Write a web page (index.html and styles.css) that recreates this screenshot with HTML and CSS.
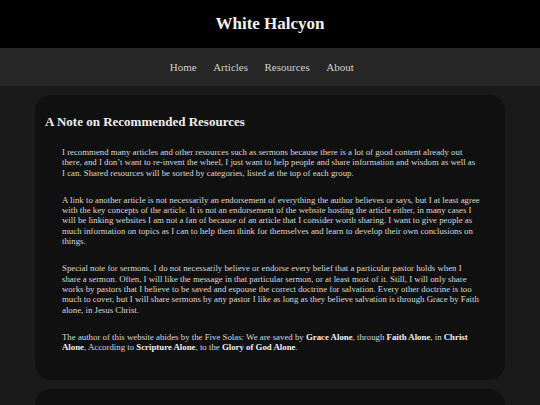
FILE: index.html
```html
<!DOCTYPE html>
<html>
<head>
<meta charset="utf-8">
<link rel="stylesheet" href="styles.css">
</head>
<body>
<header class="site-header">
  <h1 class="site-title">White Halcyon</h1>
</header>
<nav class="site-nav">
  <a href="#">Home</a>
  <a href="#">Articles</a>
  <a href="#">Resources</a>
  <a href="#">About</a>
</nav>
<main class="content">
  <section class="card">
    <h2 class="card-title">A Note on Recommended Resources</h2>
    <p>I recommend many articles and other resources such as sermons because there is a lot of good content already out there, and I don’t want to re-invent the wheel, I just want to help people and share information and wisdom as well as I can. Shared resources will be sorted by categories, listed at the top of each group.</p>
    <p>A link to another article is not necessarily an endorsement of everything the author believes or says, but I at least agree with the key concepts of the article. It is not an endorsement of the website hosting the article either, in many cases I will be linking websites I am not a fan of because of an article that I consider worth sharing. I want to give people as much information on topics as I can to help them think for themselves and learn to develop their own conclusions on things.</p>
    <p>Special note for sermons, I do not necessarily believe or endorse every belief that a particular pastor holds when I share a sermon. Often, I will like the message in that particular sermon, or at least most of it. Still, I will only share works by pastors that I believe to be saved and espouse the correct doctrine for salvation. Every other doctrine is too much to cover, but I will share sermons by any pastor I like as long as they believe salvation is through Grace by Faith alone, in Jesus Christ.</p>
    <p>The author of this website abides by the Five Solas: We are saved by <strong>Grace Alone</strong>, through <strong>Faith Alone</strong>, in <strong>Christ Alone</strong>, According to <strong>Scripture Alone</strong>, to the <strong>Glory of God Alone</strong>.</p>
  </section>
  <section class="card card-next"></section>
</main>
</body>
</html>
```
FILE: styles.css
```css
html, body {
  margin: 0;
  padding: 0;
}
body {
  background: #1a1a1a;
  font-family: "Liberation Serif", "Times New Roman", serif;
  color: #dcdcdc;
}
.site-header {
  background: #000;
  height: 48px;
  display: flex;
  align-items: center;
  justify-content: center;
}
.site-title {
  margin: 0;
  font-size: 17px;
  font-weight: bold;
  color: #f2f2f2;
}
.site-nav {
  background: #262626;
  height: 38px;
  display: flex;
  align-items: center;
  justify-content: center;
}
.site-nav a {
  color: #d0d0d0;
  text-decoration: none;
  font-size: 11px;
  margin-right: 16.5px;
}
.content {
  padding: 9px 35px 0;
  display: flex;
  flex-direction: column;
  gap: 9px;
}
.card {
  background: #101010;
  border-radius: 16px;
  padding: 19px 10px 28px;
}
.card-title {
  margin: 0 0 17px;
  font-size: 13px;
  font-weight: bold;
  color: #efefef;
}
.card p {
  margin: 0 15px 17px 17px;
  font-size: 8.8px;
  line-height: 10.3px;
  color: #d8d8d8;
}
.card p:last-child {
  margin-bottom: 0;
}
.card strong {
  color: #f0f0f0;
}
.card-next {
  height: 60px;
}
```
